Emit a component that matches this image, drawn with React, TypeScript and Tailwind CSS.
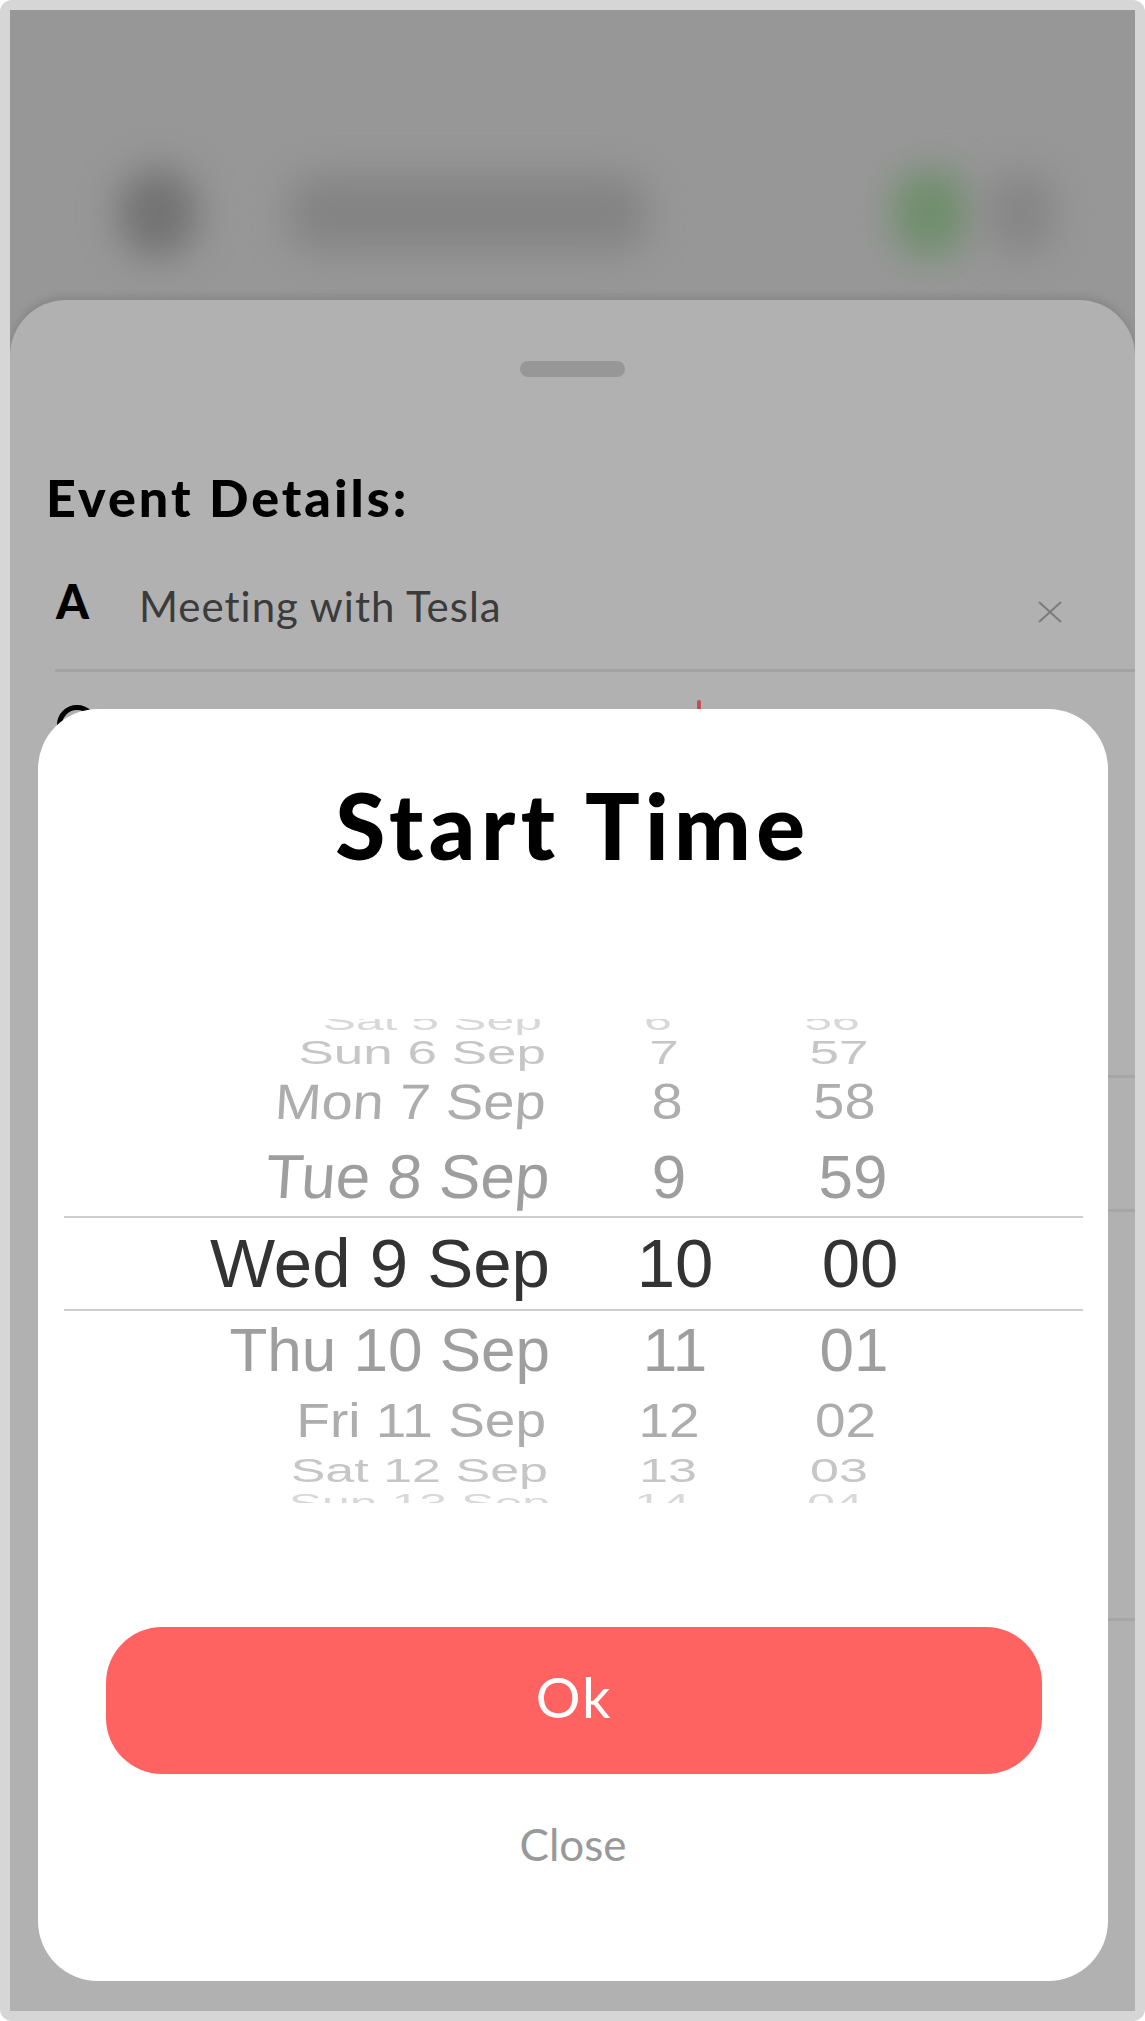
import React from 'react'

type WheelRow = {
  date: string
  hour: string
  min: string
  row: string
  text: string
  ds: string
  d: string
  hr: string
  mn: string
}

// rows of the wheel, from top to bottom; sizes fake the 3d drum
const wheel: WheelRow[] = [
  {date: 'Sat 5 Sep', hour: '6', min: '56', row: 'h-[34px]', text: 'text-[50px] scale-y-[0.5] text-[#d8d8d8]', ds: '', d: 'pr-[8px]', hr: 'pr-[34px]', mn: 'pr-[56px]'},
  {date: 'Sun 6 Sep', hour: '7', min: '57', row: 'h-[28px]', text: 'text-[53px] scale-y-[0.64] text-[#c6c6c6]', ds: '', d: 'pr-[4px]', hr: 'pr-[22px]', mn: 'pr-[42px]'},
  {date: 'Mon 7 Sep', hour: '8', min: '58', row: 'h-[72px]', text: 'text-[56px] scale-y-[0.89] text-[#adadad]', ds: '-skew-x-[3deg]', d: 'pr-[4px]', hr: 'pr-[16px]', mn: 'pr-[31px]'},
  {date: 'Tue 8 Sep', hour: '9', min: '59', row: 'h-[78px]', text: 'text-[62px] text-[#9e9e9e]', ds: '-skew-x-[4deg]', d: '', hr: 'pr-[12px]', mn: 'pr-[14px]'},
  {date: 'Wed 9 Sep', hour: '10', min: '00', row: 'h-[95px] border-y-2 border-[#cdcdcd]', text: 'text-[69px] text-[#333333]', ds: '', d: '', hr: '', mn: ''},
  {date: 'Thu 10 Sep', hour: '11', min: '01', row: 'h-[77px]', text: 'text-[62px] text-[#9e9e9e]', ds: '', d: '', hr: '', mn: 'pr-[12px]'},
  {date: 'Fri 11 Sep', hour: '12', min: '02', row: 'h-[64px]', text: 'text-[55px] scale-y-[0.89] text-[#adadad]', ds: '', d: 'pr-[4px]', hr: 'pr-[12px]', mn: 'pr-[29px]'},
  {date: 'Sat 12 Sep', hour: '13', min: '03', row: 'h-[38px]', text: 'text-[52px] scale-y-[0.63] text-[#c6c6c6]', ds: '', d: 'pr-[2px]', hr: 'pr-[14px]', mn: 'pr-[42px]'},
  {date: 'Sun 13 Sep', hour: '14', min: '04', row: 'h-[26px]', text: 'text-[50px] scale-y-[0.5] text-[#d8d8d8]', ds: '', d: '', hr: 'pr-[26px]', mn: 'pr-[50px]'},
]

function TimeWheel() {
  return (
    <div className="mt-[149px] ml-[26px] mr-[25px] h-[484px] shrink-0 overflow-hidden font-['Liberation_Sans',Arial,sans-serif]">
      <div className="-mt-[15px] flex flex-col">
        {wheel.map((r) => (
          <div key={r.date} className={`flex items-center shrink-0 ${r.row}`}>
            <div className={`flex w-[486px] justify-end ${r.d}`}>
              <span className={`block leading-none whitespace-nowrap ${r.text} ${r.ds}`}>{r.date}</span>
            </div>
            <div className={`flex w-[250px] justify-center ${r.hr}`}>
              <span className={`block leading-none whitespace-nowrap ${r.text}`}>{r.hour}</span>
            </div>
            <div className={`flex w-[120px] justify-center ${r.mn}`}>
              <span className={`block leading-none whitespace-nowrap ${r.text}`}>{r.min}</span>
            </div>
          </div>
        ))}
      </div>
    </div>
  )
}

export default function App() {
  return (
    <div className="w-[1145px] h-[2021px] bg-white font-['Lato',sans-serif]">
      <div className="h-full rounded-[12px] bg-[#d6d6d6] p-[10px]">
        <div className="relative h-full overflow-hidden bg-[#979797] flex flex-col">
          {/* blurred top bar of the screen behind */}
          <div className="h-[290px] shrink-0 flex items-center pt-[116px]">
            <div className="ml-[108px] w-[80px] h-[90px] rounded-full bg-[#737373] blur-[18px]" />
            <div className="ml-[90px] w-[360px] h-[78px] rounded-[28px] bg-[#848484] blur-[18px]" />
            <div className="ml-[244px] w-[76px] h-[90px] rounded-full bg-[#6f8e6c] blur-[18px]" />
            <div className="ml-[18px] w-[70px] h-[86px] rounded-full bg-[#868686] blur-[18px]" />
          </div>

          {/* sheet behind the modal */}
          <div className="flex-1 flex flex-col rounded-t-[56px] bg-[#b1b1b1] shadow-[0_-3px_10px_rgba(0,0,0,0.12)]">
            <div className="mt-[61px] mx-auto w-[105px] h-[16px] rounded-full bg-[#979797]" />
            <div className="mt-[94px] pl-[36px] text-[52px] leading-none font-black text-black tracking-[3px]">
              Event Details:
            </div>
            <div className="mt-[55px] h-[91px] flex items-start">
              <span className="ml-[46px] w-[83px] text-[47px] leading-none font-black text-black">A</span>
              <span className="mt-[7px] text-[42px] leading-none text-[#3b3b3b] tracking-[1px]">Meeting with Tesla</span>
              <svg className="ml-auto mr-[72px] mt-[23px]" width="26" height="22" viewBox="0 0 26 22">
                <path d="M2 1 L24 21 M24 1 L2 21" stroke="#7b7b7b" strokeWidth="2" fill="none" />
              </svg>
            </div>
            <div className="ml-[45px] h-[3px] bg-[#a3a3a3]" />
            <div className="h-[403px] flex items-start">
              <div className="ml-[47px] mt-[33px] w-[40px] h-[40px] rounded-full border-[5px] border-black" />
              <div className="ml-[600px] mt-[28px] w-[4px] h-[60px] rounded-full bg-[#c24f4c]" />
            </div>
            <div className="ml-[45px] h-[3px] bg-[#a6a6a6]" />
            <div className="h-[131px]" />
            <div className="ml-[45px] h-[3px] bg-[#a6a6a6]" />
            <div className="h-[406px]" />
            <div className="ml-[45px] h-[3px] bg-[#a6a6a6]" />
          </div>

          {/* start time modal */}
          <div className="absolute left-[28px] top-[699px] w-[1070px] h-[1272px] rounded-[60px] bg-white flex flex-col">
            <div className="mt-[70px] text-center text-[91px] leading-none font-black text-black tracking-[5.5px]">
              Start Time
            </div>
            <TimeWheel />
            <button className="mt-[124px] ml-[68px] mr-[66px] h-[147px] shrink-0 rounded-[56px] bg-[#ff6361] flex items-center justify-center pb-[8px]">
              <span className="text-[56px] leading-none text-white tracking-[2px]">Ok</span>
            </button>
            <div className="mt-[48px] text-center text-[44px] leading-none text-[#999999]">Close</div>
          </div>
        </div>
      </div>
    </div>
  )
}
